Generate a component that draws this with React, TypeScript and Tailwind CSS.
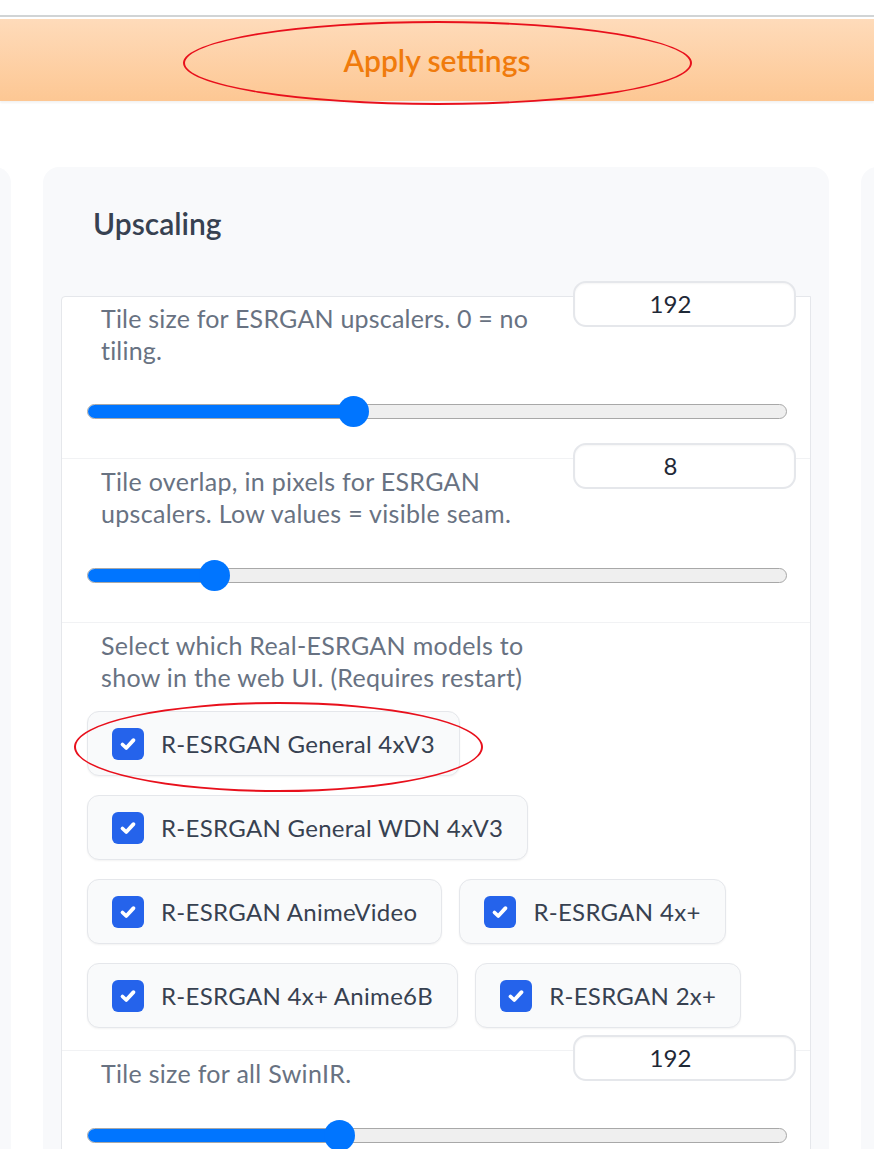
import React from "react";

type SliderRow = {
  label: string[];
  value: number;
  min: number;
  max: number;
};

const models = [
  "R-ESRGAN General 4xV3",
  "R-ESRGAN General WDN 4xV3",
  "R-ESRGAN AnimeVideo",
  "R-ESRGAN 4x+",
  "R-ESRGAN 4x+ Anime6B",
  "R-ESRGAN 2x+",
];

const Slider = ({ value, min, max }: { value: number; min: number; max: number }) => {
  const frac = (value - min) / (max - min);
  const center = 15.5 + frac * (700 - 31);
  return (
    <div className="relative mx-[25px] flex h-[31px] w-[700px] items-center">
      <div className="relative h-[15px] w-full overflow-hidden rounded-full border border-[#a8a8a8] bg-[#efefef]">
        <div className="h-full bg-[#0075ff]" style={{ width: center }} />
      </div>
      <div
        className="absolute top-0 h-[31px] w-[31px] rounded-full bg-[#0075ff]"
        style={{ left: center - 15.5 }}
      />
    </div>
  );
};

const NumberBox = ({ value }: { value: number }) => (
  <div className="mr-[14px] -mt-[16px] flex h-[46px] w-[223px] shrink-0 items-center justify-center rounded-[13px] border-2 border-[#e5e7eb] bg-white pr-[28px] text-[24px] text-[#1f2937] shadow-[inset_0_1px_2px_rgba(0,0,0,0.04)]">
    {value}
  </div>
);

const SliderBlock = ({ row, first }: { row: SliderRow; first?: boolean }) => (
  <div className={first ? "pb-[31px]" : "border-t border-[#f1f2f4] pb-[31px]"}>
    <div className="flex items-start justify-between">
      <p
        className={
          first
            ? "pl-[39px] pt-[5px] text-[25px] leading-[32px] tracking-[0.2px] text-[#687282]"
            : "pl-[39px] pt-[6px] text-[25px] leading-[32px] tracking-[0.3px] text-[#687282]"
        }
      >
        {row.label.map((l, i) => (
          <React.Fragment key={i}>
            {i > 0 && <br />}
            {l}
          </React.Fragment>
        ))}
      </p>
      <NumberBox value={row.value} />
    </div>
    <div className={first ? "mt-[30px]" : "mt-[31px]"}>
      <Slider value={row.value} min={row.min} max={row.max} />
    </div>
  </div>
);

const Check = () => (
  <span className="flex h-8 w-8 shrink-0 items-center justify-center rounded-[6px] bg-[#2563eb]">
    <svg width="20" height="20" viewBox="0 0 16 16" fill="none">
      <path d="M3.6 8.4 L6.6 11.2 L12.4 4.9" stroke="white" strokeWidth="3" strokeLinecap="round" strokeLinejoin="round" />
    </svg>
  </span>
);

export default function App() {
  return (
    <div className="relative h-[1149px] w-[874px] overflow-hidden bg-white [font-family:Lato,'Noto_Sans',sans-serif]">
      <div className="h-[15px]" />
      <div className="h-[2px] bg-[#d1d4d5]" />
      <div className="h-[2px]" />
      <button className="flex h-[82px] w-full items-center justify-center bg-gradient-to-b from-[#fedbba] to-[#fdc793] text-[30px] font-semibold text-[#f07b0c] shadow-[0_2px_2px_rgba(0,0,0,0.05)]">
        Apply settings
      </button>

      <div className="absolute left-[183px] top-[21px] h-[84px] w-[509px] rounded-[50%] border-[2.5px] border-[#e8101c]" />

      <div className="mt-[66px] flex gap-8">
        <div className="-ml-[400px] h-[1000px] w-[411px] shrink-0 rounded-[16px] bg-[#f8f9fb]" />
        <div className="w-[786px] shrink-0 rounded-[16px] bg-[#f8f9fb] pt-[37px]">
          <h2 className="pl-[50px] text-[30px] font-semibold leading-[38px] text-[#374151]">Upscaling</h2>
          <div className="mx-[18px] mt-[54px] rounded-tl-[4px] border border-[#e5e7eb] bg-white">
            <SliderBlock
              first
              row={{ label: ["Tile size for ESRGAN upscalers. 0 = no", "tiling."], value: 192, min: 0, max: 512 }}
            />
            <SliderBlock
              row={{
                label: ["Tile overlap, in pixels for ESRGAN", "upscalers. Low values = visible seam."],
                value: 8,
                min: 0,
                max: 48,
              }}
            />
            <div className="border-t border-[#f1f2f4] pb-[22px]">
              <p className="pl-[39px] pt-[6px] text-[25px] leading-[32px] tracking-[0.3px] text-[#687282]">
                Select which Real-ESRGAN models to
                <br />
                show in the web UI. (Requires restart)
              </p>
              <div className="mt-[18px] flex w-[730px] flex-wrap gap-x-[17px] gap-y-[19px] pl-[25px]">
                {models.map((m) => (
                  <label
                    key={m}
                    className="flex h-[65px] items-center gap-[17px] rounded-[12px] border border-[#e5e7eb] bg-[#f9fafb] px-[24px] shadow-[0_1px_2px_rgba(0,0,0,0.05)]"
                  >
                    <Check />
                    <span className="text-[24px] tracking-[0.3px] text-[#374151]">{m}</span>
                  </label>
                ))}
              </div>
            </div>
            <SliderBlock row={{ label: ["Tile size for all SwinIR."], value: 192, min: 16, max: 512 }} />
          </div>
        </div>
        <div className="h-[1000px] w-[400px] shrink-0 rounded-[16px] bg-[#f8f9fb]" />
      </div>

      <div className="absolute left-[74px] top-[702px] h-[90px] w-[409px] rounded-[50%] border-[2.5px] border-[#e8101c]" />
    </div>
  );
}
